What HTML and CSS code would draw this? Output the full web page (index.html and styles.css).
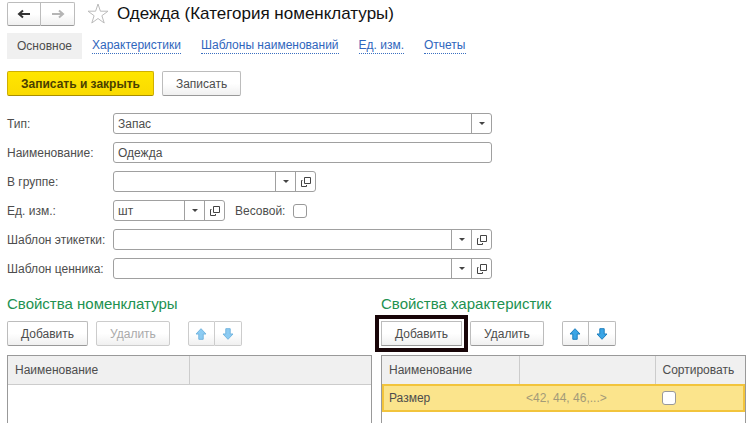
FILE: index.html
```html
<!DOCTYPE html>
<html lang="ru">
<head>
    <meta charset="UTF-8">
    <meta name="viewport" content="width=device-width, initial-scale=1.0">
    <title>Одежда (Категория номенклатуры)</title>
    <link rel="stylesheet" href="styles.css">
</head>
<body>
    <svg class="sprite" aria-hidden="true">
        <symbol id="open" viewBox="0 0 10 10">
            <path d="M3.5 .5h6v6h-6z M1.5 3.5h-1v6h5v-1.500" fill="none" stroke="#444"/>
        </symbol>
        <symbol id="up" viewBox="0 0 12 12">
            <path d="M6 .7 11 6H8.200v5.300H3.800V6H1z"/>
        </symbol>
        <symbol id="down" viewBox="0 0 12 12">
            <path d="M6 11.300 11 6H8.200V.7H3.800V6H1z"/>
        </symbol>
    </svg>

    <header class="header">
        <div class="button-group">
            <button type="button" class="button nav-button" aria-label="Назад">
                <svg width="14" height="10" viewBox="0 0 14 10"><path d="M13 5H3M6 1.500 2 5l4 3.500" fill="none" stroke="#333" stroke-width="2"/></svg>
            </button>
            <button type="button" class="button nav-button" aria-label="Вперед">
                <svg width="14" height="10" viewBox="0 0 14 10"><path d="M1 5h10M8 1.500 12 5 8 8.500" fill="none" stroke="#b5b5b5" stroke-width="2"/></svg>
            </button>
        </div>
        <svg class="star" width="22" height="22" viewBox="0 0 22 22"><path d="M11 1 13.400 8.200H21L14.900 12.700 17.200 20 11 15.500 4.800 20 7.100 12.700 1 8.200H8.600z" fill="#fff" stroke="#bbb"/></svg>
        <h1>Одежда (Категория номенклатуры)</h1>
    </header>

    <nav class="tabs">
        <span class="tab-active">Основное</span>
        <a href="#">Характеристики</a>
        <a href="#">Шаблоны наименований</a>
        <a href="#">Ед. изм.</a>
        <a href="#">Отчеты</a>
    </nav>

    <div class="commands">
        <button type="button" class="button primary">Записать и закрыть</button>
        <button type="button" class="button">Записать</button>
    </div>

    <form class="form">
        <label for="type">Тип:</label>
        <div class="field">
            <div class="combo">
                <select id="type"><option>Запас</option></select>
                <span class="arrow"></span>
            </div>
        </div>

        <label for="name">Наименование:</label>
        <div class="field">
            <input type="text" id="name" value="Одежда">
        </div>

        <label for="group">В группе:</label>
        <div class="field medium">
            <div class="combo">
                <select id="group"><option></option></select>
                <span class="arrow"></span>
            </div>
            <button type="button" class="open" aria-label="Открыть"><svg width="10" height="10"><use href="#open"/></svg></button>
        </div>

        <label for="unit">Ед. изм.:</label>
        <div class="unit-row">
            <div class="field small">
                <div class="combo">
                    <select id="unit"><option>шт</option></select>
                    <span class="arrow"></span>
                </div>
                <button type="button" class="open" aria-label="Открыть"><svg width="10" height="10"><use href="#open"/></svg></button>
            </div>
            <label for="weight">Весовой:</label>
            <input type="checkbox" id="weight">
        </div>

        <label for="labelTemplate">Шаблон этикетки:</label>
        <div class="field">
            <div class="combo">
                <select id="labelTemplate"><option></option></select>
                <span class="arrow"></span>
            </div>
            <button type="button" class="open" aria-label="Открыть"><svg width="10" height="10"><use href="#open"/></svg></button>
        </div>

        <label for="priceTemplate">Шаблон ценника:</label>
        <div class="field">
            <div class="combo">
                <select id="priceTemplate"><option></option></select>
                <span class="arrow"></span>
            </div>
            <button type="button" class="open" aria-label="Открыть"><svg width="10" height="10"><use href="#open"/></svg></button>
        </div>
    </form>

    <main class="panels">
        <section class="panel">
            <h2>Свойства номенклатуры</h2>
            <div class="toolbar">
                <button type="button" class="button">Добавить</button>
                <button type="button" class="button" disabled>Удалить</button>
                <div class="button-group">
                    <button type="button" class="button move" disabled aria-label="Вверх"><svg width="12" height="12"><use href="#up"/></svg></button>
                    <button type="button" class="button move" disabled aria-label="Вниз"><svg width="12" height="12"><use href="#down"/></svg></button>
                </div>
            </div>
            <div class="table-box">
                <table>
                    <thead>
                        <tr>
                            <th>Наименование</th>
                            <th></th>
                        </tr>
                    </thead>
                </table>
            </div>
        </section>

        <section class="panel">
            <h2>Свойства характеристик</h2>
            <div class="toolbar">
                <button type="button" class="button highlighted">Добавить</button>
                <button type="button" class="button">Удалить</button>
                <div class="button-group">
                    <button type="button" class="button move" aria-label="Вверх"><svg width="12" height="12"><use href="#up"/></svg></button>
                    <button type="button" class="button move" aria-label="Вниз"><svg width="12" height="12"><use href="#down"/></svg></button>
                </div>
            </div>
            <div class="table-box">
                <table>
                    <thead>
                        <tr>
                            <th class="col-name">Наименование</th>
                            <th></th>
                            <th class="col-sort">Сортировать</th>
                        </tr>
                    </thead>
                    <tbody>
                        <tr class="selected">
                            <td>Размер</td>
                            <td class="hint">&lt;42, 44, 46,...&gt;</td>
                            <td><input type="checkbox" aria-label="Сортировать"></td>
                        </tr>
                    </tbody>
                </table>
            </div>
        </section>
    </main>
</body>
</html>
```
FILE: styles.css
```css
* {
    box-sizing: border-box;
}
body {
    display: flex;
    flex-direction: column;
    height: 100vh;
    margin: 0;
    padding: 2px 4px 0 7px;
    overflow: hidden;
    background: #fff;
    color: #4d4d4d;
    font: 12px/16px "Liberation Sans", Arial, sans-serif;
}
button, input, select {
    color: inherit;
    font: inherit;
}
.sprite {
    display: none;
}
.header {
    display: flex;
    align-items: center;
    height: 24px;
}
.star {
    margin: 0 8px 0 12px;
}
h1 {
    margin: 0;
    color: #111;
    font-size: 17px;
    font-weight: normal;
    line-height: 24px;
}
.button {
    height: 25px;
    padding: 0 13px;
    border: 1px solid #bcbcbc;
    border-bottom-color: #999;
    border-radius: 2px;
    background: linear-gradient(#fff 50%, #f0f0f0);
    white-space: nowrap;
}
.button:disabled {
    border-color: #ccc;
    color: #aaa;
}
.primary {
    border-color: #d0b000;
    border-bottom-color: #a88e00;
    background: linear-gradient(#ffe600, #fada00);
    color: #4a3f00;
    font-weight: bold;
}
.button-group {
    display: flex;
}
.button-group .button {
    display: flex;
    align-items: center;
    justify-content: center;
    padding: 0;
}
.button-group .button:first-child {
    border-radius: 2px 0 0 2px;
}
.button-group .button:last-child {
    border-left: 0;
    border-radius: 0 2px 2px 0;
}
.button-group .nav-button {
    width: 34px;
    height: 24px;
}
.tabs {
    display: flex;
    align-items: center;
    gap: 20px;
    margin-top: 7px;
}
.tab-active {
    margin-right: -10px;
    padding: 5px 10px;
    background: #f0f0f0;
}
.tabs a {
    border-bottom: 1px dotted #3a6fc0;
    color: #2f66bd;
    line-height: 15px;
    text-decoration: none;
}
.commands {
    display: flex;
    gap: 8px;
    margin-top: 12px;
}
.form {
    display: grid;
    grid-template-columns: 106px minmax(0, 379px);
    grid-auto-rows: 21px;
    row-gap: 8px;
    align-items: center;
    margin-top: 17px;
}
.form label {
    white-space: nowrap;
}
.field {
    display: flex;
    height: 21px;
    border: 1px solid #a0a0a0;
    border-radius: 3px;
    background: #fff;
}
.medium {
    width: 203px;
}
.small {
    width: 112px;
}
.field input, .field select {
    width: 100%;
    height: 19px;
    padding: 0 4px;
    border: 0;
    background: none;
    appearance: none;
}
.combo {
    position: relative;
    flex: 1;
}
.arrow {
    position: absolute;
    top: 0;
    right: 0;
    display: flex;
    align-items: center;
    justify-content: center;
    width: 20px;
    height: 19px;
    border-left: 1px solid #a0a0a0;
    pointer-events: none;
}
.arrow::after {
    content: "";
    border: 3px solid transparent;
    border-top-color: #444;
    border-bottom: 0;
}
.open {
    display: flex;
    align-items: center;
    justify-content: center;
    width: 20px;
    padding: 0;
    border: 0;
    border-left: 1px solid #a0a0a0;
    background: none;
}
.unit-row {
    display: flex;
    align-items: center;
}
.unit-row label {
    margin: 0 8px 0 10px;
}
input[type="checkbox"] {
    display: block;
    width: 14px;
    height: 14px;
    margin: 0;
    border: 1px solid #999;
    border-radius: 3px;
    background: #fff;
    appearance: none;
}
.panels {
    display: grid;
    flex: 1;
    grid-template-columns: 1fr 1fr;
    gap: 9px;
    margin-top: 15px;
}
.panel {
    display: flex;
    flex-direction: column;
}
h2 {
    margin: 0;
    color: #219150;
    font-size: 15px;
    font-weight: normal;
    line-height: 20px;
}
.toolbar {
    display: flex;
    gap: 8px;
    margin-top: 7px;
}
.toolbar .button-group {
    margin-left: 10px;
}
.button-group .move {
    width: 27px;
}
.move svg {
    fill: #3aa5e6;
    stroke: #1f7fbd;
}
.move:disabled svg {
    fill: #8ccbf2;
    stroke: #74b5df;
}
/* frame around the button to press */
.highlighted {
    border-radius: 0;
    outline: 4px solid #180508;
    outline-offset: 2px;
}
.table-box {
    flex: 1;
    margin-top: 9px;
    border: 1px solid #999;
    border-bottom: 0;
}
table {
    width: 100%;
    border-collapse: collapse;
    table-layout: fixed;
}
th, td {
    height: 28px;
    padding: 0 7px;
    text-align: left;
    white-space: nowrap;
}
th {
    border-bottom: 1px solid #ccc;
    background: #f0f0f0;
    font-weight: normal;
}
th + th {
    border-left: 1px solid #ccc;
}
.col-name {
    width: 137px;
}
.col-sort {
    width: 90px;
}
.selected {
    outline: 2px solid #f2c43c;
    outline-offset: -2px;
    background: #fbe48c;
}
.hint {
    color: #a39a78;
}
```
